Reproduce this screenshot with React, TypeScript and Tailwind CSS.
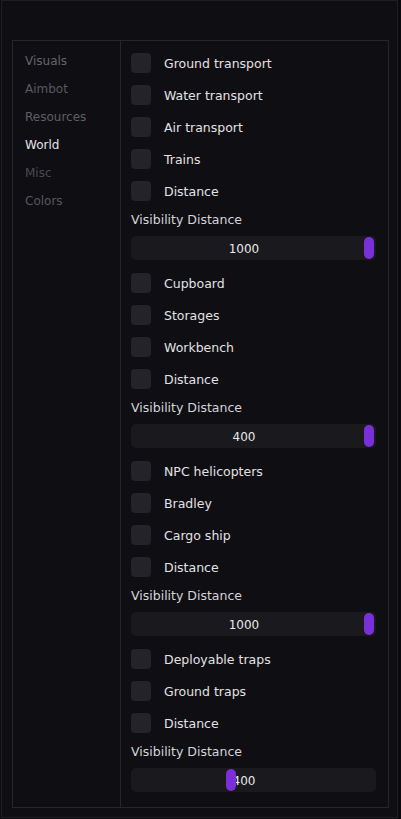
import React from "react";

const font = { fontFamily: '"DejaVu Sans", "Liberation Sans", sans-serif' };

type Section = { items: string[]; value: string; knob: number };

const sections: Section[] = [
  { items: ["Ground transport", "Water transport", "Air transport", "Trains", "Distance"], value: "1000", knob: 233 },
  { items: ["Cupboard", "Storages", "Workbench", "Distance"], value: "400", knob: 233 },
  { items: ["NPC helicopters", "Bradley", "Cargo ship", "Distance"], value: "1000", knob: 233 },
  { items: ["Deployable traps", "Ground traps", "Distance"], value: "400", knob: 95 },
];

const nav = [
  { name: "Visuals", cls: "text-[#66656b]" },
  { name: "Aimbot", cls: "text-[#5a5960]" },
  { name: "Resources", cls: "text-[#5f5e64]" },
  { name: "World", cls: "text-[#e4e4e6]" },
  { name: "Misc", cls: "text-[#4b4a50]" },
  { name: "Colors", cls: "text-[#58575d]" },
];

function Row({ label }: { label: string }) {
  return (
    <div className="flex items-center h-[20px]">
      <div className="w-[20px] h-[20px] rounded-[4px] bg-[#242329]" />
      <span className="ml-[13px] pt-[2px] text-[12.5px] leading-[14px] text-[#e2e2e4]">{label}</span>
    </div>
  );
}

function Slider({ value, knob }: { value: string; knob: number }) {
  return (
    <div className="relative mt-[9px] h-[24px] w-[245px] rounded-[5px] bg-[#1a191e]">
      <div className="absolute inset-0 flex items-center justify-center pr-[19px] pt-[1px] text-[12px] text-[#e8e8ea]">
        {value}
      </div>
      <div
        className="absolute top-[1px] h-[22px] w-[10px] rounded-full bg-[#7a2fd8]"
        style={{ left: knob }}
      />
    </div>
  );
}

export default function App() {
  return (
    <div className="w-[401px] h-[819px] bg-[#0b0a0e] pl-[1px]" style={font}>
      <div className="w-[397px] h-[818px] border border-[#1f1e23] bg-[#0f0e13] pt-[39px] pl-[10px]">
        <div className="flex w-[377px] h-[768px] border border-[#26252b]">
          <div className="w-[108px] shrink-0 border-r border-[#26252b] pt-[6px] pl-[12px]">
            {nav.map((n) => (
              <div key={n.name} className={`h-[28px] leading-[28px] text-[12px] ${n.cls}`}>
                {n.name}
              </div>
            ))}
          </div>
          <div className="flex flex-col pl-[10px] pt-[12px]">
            {sections.map((s, i) => (
              <div key={i} className={`flex flex-col ${i > 0 ? "mt-[13px]" : ""}`}>
                <div className="flex flex-col gap-[12px]">
                  {s.items.map((it) => (
                    <Row key={it} label={it} />
                  ))}
                </div>
                <div className="mt-[12px] h-[14px] leading-[14px] text-[12.5px] text-[#d4d4d8]">
                  Visibility Distance
                </div>
                <Slider value={s.value} knob={s.knob} />
              </div>
            ))}
          </div>
        </div>
      </div>
    </div>
  );
}
